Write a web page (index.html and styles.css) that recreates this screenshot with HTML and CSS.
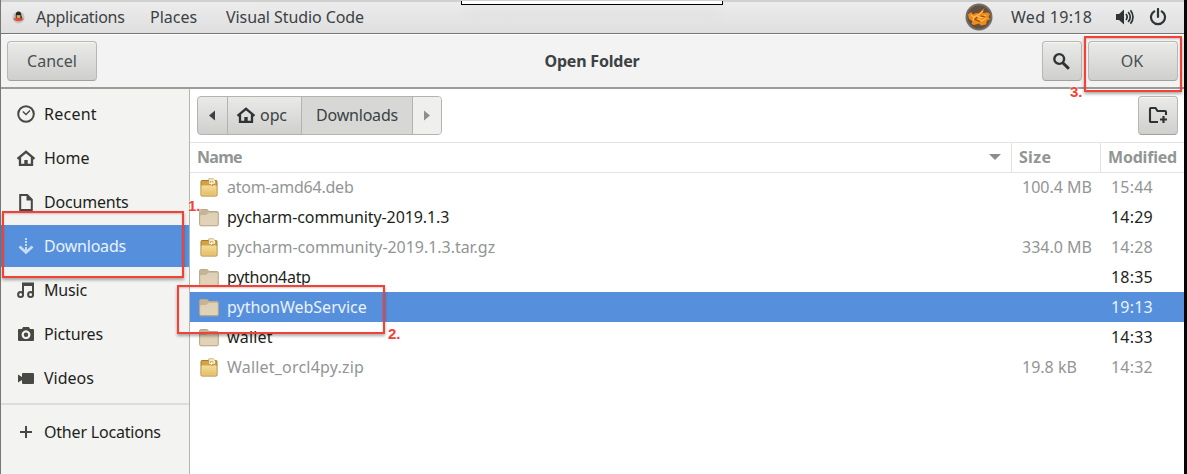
FILE: index.html
```html
<!DOCTYPE html>
<html lang="en">
<head>
<meta charset="utf-8">
<title>Open Folder</title>
<link rel="stylesheet" href="styles.css">
</head>
<body>
<svg class="defs" width="0" height="0">
  <defs>
    <linearGradient id="tan" x2="0" y2="1"><stop stop-color="#ddd0b7"/><stop offset="1" stop-color="#e3d3b8"/></linearGradient>
    <linearGradient id="gold" x2="0" y2="1"><stop stop-color="#f6dc96"/><stop offset="1" stop-color="#e3bd67"/></linearGradient>
    <symbol id="folder" viewBox="0 0 20 18"><path d="M.6 16V2.2Q.6 1 1.800 1h6q.8 0 1.200.8L10 3h8q1.300 0 1.300 1.300V16q0 1.300-1.300 1.300H2Q.6 17.300.6 16z" fill="#c6b594" stroke="#b9a889"/><path d="M1.200 15.800V7.500q0-1 1-1h5L9.500 4.300h8.300q.9 0 .9.900v10.600q0 .8-.8.8H2q-.8 0-.8-.8z" fill="url(#tan)"/></symbol>
    <symbol id="archive" viewBox="0 0 18 19"><path d="M1 3.500Q1 2.500 2 2.500h14q1 0 1 1V17q0 1-1 1H2q-1 0-1-1z" fill="#d3a243" stroke="#a87b2b"/><path d="M1.800 7.800h14.400v9.400H1.800z" fill="url(#gold)" stroke="#f3d998" stroke-width=".7"/><path d="M8.800.8h4.400l2.300 2.300v3h-3V8l-1.500-1.500H8.800z" fill="#fff8e5" stroke="#b98e42" stroke-width=".7"/><path d="M10.500 5V3.300h2.500v1.500" fill="none" stroke="#d0a552"/></symbol>
    <symbol id="house" viewBox="0 0 20 18"><path d="m1.500 9.800 8.500-7 8.500 7M4 8.300v7.600h12V8.300" fill="none" stroke="currentColor" stroke-width="2.300"/><path d="M8.300 16v-5h3.400v5" fill="currentColor"/></symbol>
  </defs>
</svg>
<div class="desktop">
  <header class="topbar">
    <svg class="distro" viewBox="0 0 14 14"><circle cx="7" cy="7.500" r="6.500" fill="#c3c5c4"/><path d="M4 5Q4 1 7 1t3 4l1 4H4z" fill="#22252a"/><path d="M5 5h4v3H5z" fill="#e6b044"/><path d="M1.500 8.500 7 8l5.500.5q-1 3-5.500 3t-5.500-3z" fill="#e54a3d"/></svg>
    <span class="t-app">Applications</span><span class="t-places">Places</span><span class="t-code">Visual Studio Code</span>
    <div class="tray">
      <svg class="orb" viewBox="0 0 28 28"><circle cx="14" cy="14" r="13.500" fill="#716e6a"/><circle cx="14" cy="14" r="11.500" fill="#66503d"/><path d="M3 11.500 6 9l2 2.500 3-1.500 3 .5L19.500 5l-2 5 5.500-.5 2 2-1.500 2 1.500 3-3 1-1 4-5 1-2-2-5 1.500-2.500-1 1-3L4 16z" fill="#f08a18"/><path d="m6 12 3 2 4-2 5-4m-6 5 4 2 5-3M9 14l-1 4m5-2 4 2 4-3" fill="none" stroke="#ffbe55" stroke-width="1.200"/><path d="m12 14-2 2.500 5 2m1-5.500 4 1" fill="none" stroke="#8d4c15" stroke-width="1.200"/></svg>
      <span class="clock">Wed 19:18</span>
      <svg class="volume" viewBox="0 0 19 16"><path d="M1 5h3l5-4.500v15L4 11H1z" fill="currentColor"/><path d="M11 5q2.300 3 0 6M13.200 3q4 5 0 10M15.500 1.200q5 6.800 0 13.600" fill="none" stroke="currentColor" stroke-width="1.700"/></svg>
      <svg class="power" viewBox="0 0 18 18"><path d="M5.200 3.300a7 7 0 1 0 7.600 0M9 1v8" fill="none" stroke="currentColor" stroke-width="2.200" stroke-linecap="round"/></svg>
    </div>
    <div class="overlay-edge"></div>
  </header>
  <div class="headerbar">
    <button class="btn cancel"><span>Cancel</span></button>
    <h1>Open Folder</h1>
    <button class="btn search"><svg viewBox="0 0 18 18"><circle cx="7.200" cy="7" r="4.900" fill="none" stroke="currentColor" stroke-width="2.400"/><path d="m11 11 5 4.800" stroke="currentColor" stroke-width="3" stroke-linecap="round"/></svg></button>
    <button class="btn ok"><span>OK</span></button>
  </div>
  <div class="content">
    <nav class="sidebar">
      <div class="place"><svg viewBox="0 0 20 20"><circle cx="10" cy="10" r="7.800" fill="none" stroke="currentColor" stroke-width="2"/><path d="m6.800 7.500 3.200 3 4-4" fill="none" stroke="currentColor" stroke-width="1.300"/></svg><span class="s-recent">Recent</span></div>
      <div class="place"><svg viewBox="0 -1 20 20"><use href="#house" width="20" height="18"/></svg><span>Home</span></div>
      <div class="place"><svg viewBox="0 0 20 20"><path d="M4.200 3h7l4.600 4.600V18H4.200z" fill="none" stroke="currentColor" stroke-width="2"/><path d="M10.500 2.500v6h6z" fill="currentColor"/></svg><span class="s-docs">Documents</span></div>
      <div class="place active"><svg viewBox="0 0 20 20"><path d="M10 2v2m0 1v2m0 1v2m0 1v5" stroke="currentColor" stroke-width="2"/><path d="m3.500 10.500 6.500 6 6.500-6" fill="none" stroke="currentColor" stroke-width="2.700"/></svg><span class="s-down">Downloads</span></div>
      <div class="place"><svg viewBox="0 0 20 20"><path d="M7 15V3.500h10V15M7 5h10" fill="none" stroke="currentColor" stroke-width="2"/><circle cx="4.600" cy="14.600" r="2.500" fill="none" stroke="currentColor" stroke-width="2"/><circle cx="14.600" cy="14.600" r="2.500" fill="none" stroke="currentColor" stroke-width="2"/></svg><span class="s-music">Music</span></div>
      <div class="place"><svg viewBox="0 0 20 20"><path fill="currentColor" fill-rule="evenodd" d="M3 5h3l1-2h6l1 2h3q1 0 1 1v10q0 1-1 1H3q-1 0-1-1V6q0-1 1-1zm7 1.300a4.400 4.400 0 1 0 .01 0z"/><circle cx="10" cy="10.700" r="2.200" fill="currentColor"/></svg><span class="s-pics">Pictures</span></div>
      <div class="place"><svg viewBox="0 0 20 20"><path d="M2 6.500 6 9V6q0-1 1-1h10q1 0 1 1v9q0 1-1 1H7q-1 0-1-1v-3l-4 2.500z" fill="currentColor"/></svg><span>Videos</span></div>
      <div class="separator"></div>
      <div class="place other"><svg viewBox="0 0 20 20"><path d="M4 10h12M10 4v12" stroke="currentColor" stroke-width="2"/></svg><span class="s-other">Other Locations</span></div>
    </nav>
    <main class="chooser">
      <div class="toolbar">
        <div class="pathbar">
          <div class="crumb back"><svg viewBox="0 0 6 10"><path d="M6 0v10L0 5z" fill="currentColor"/></svg></div>
          <div class="crumb home"><svg viewBox="0 0 20 18"><use href="#house"/></svg><span class="c-opc">opc</span></div>
          <div class="crumb current"><span>Downloads</span></div>
          <div class="crumb next"><svg viewBox="0 0 6 10"><path d="M0 0v10l6-5z" fill="currentColor"/></svg></div>
        </div>
        <button class="btn new-folder"><svg viewBox="0 0 20 18"><path d="M10 16H3q-1 0-1-1V3q0-1 1-1h4.500l2 3H17q1 0 1 1v3" fill="none" stroke="currentColor" stroke-width="2.100"/><path d="M12 13.500h7M15.500 10v7" stroke="currentColor" stroke-width="2.200"/></svg></button>
      </div>
      <div class="row columns"><div class="name"><span class="h-name">Name</span><i class="sort"></i></div><div class="size"><span class="h-size">Size</span></div><div class="time"><span>Modified</span></div></div>
      <div class="row file"><svg><use href="#archive"/></svg><div class="name"><span class="f1">atom-amd64.deb</span></div><div class="size"><span>100.4 MB</span></div><div class="time"><span>15:44</span></div></div>
      <div class="row"><svg><use href="#folder"/></svg><div class="name"><span class="f2">pycharm-community-2019.1.3</span></div><div class="size"></div><div class="time"><span>14:29</span></div></div>
      <div class="row file"><svg><use href="#archive"/></svg><div class="name"><span class="f3">pycharm-community-2019.1.3.tar.gz</span></div><div class="size"><span>334.0 MB</span></div><div class="time"><span>14:28</span></div></div>
      <div class="row"><svg><use href="#folder"/></svg><div class="name"><span class="f4">python4atp</span></div><div class="size"></div><div class="time"><span>18:35</span></div></div>
      <div class="row selected"><svg><use href="#folder"/></svg><div class="name"><span>pythonWebService</span></div><div class="size"></div><div class="time"><span>19:13</span></div></div>
      <div class="row"><svg><use href="#folder"/></svg><div class="name"><span class="f6">wallet</span></div><div class="size"></div><div class="time"><span>14:33</span></div></div>
      <div class="row file"><svg><use href="#archive"/></svg><div class="name"><span class="f7">Wallet_orcl4py.zip</span></div><div class="size"><span>19.8 kB</span></div><div class="time"><span>14:32</span></div></div>
    </main>
  </div>
  <div class="mark mark-1"></div><b class="step step-1">1.</b>
  <div class="mark mark-2"></div><b class="step step-2">2.</b>
  <div class="mark mark-3"></div><b class="step step-3">3.</b>
</div>
</body>
</html>
```

FILE: styles.css
```css
* { box-sizing: border-box; }
body { margin: 0; overflow: hidden; }
.defs { position: absolute; }
.desktop { position: relative; width: 1187px; height: 474px; display: flex; flex-direction: column; background: #f3f3f2; border-left: 1px solid #777; border-right: 3px solid #050505; font: 16px/22px "Noto Sans", "Open Sans", sans-serif; color: #1d1f20; }
span, h1 { white-space: nowrap; }
svg { display: block; flex: none; }
.topbar { position: relative; height: 34px; flex: none; display: flex; align-items: center; border-top: 2px solid #d0d0d0; border-bottom: 1px solid #777; background: linear-gradient(#ececec, #dfdfdf); color: #3b4144; padding: 0 17px 2px 11px; }
.distro { width: 13px; height: 14px; margin-right: 11px; }
.t-app { width: 114px; letter-spacing: -.28px; }
.t-places { width: 76px; }
.t-code { letter-spacing: -.08px; }
.tray { display: flex; align-items: center; margin-left: auto; color: #2e3436; }
.orb { width: 28px; height: 28px; margin-right: 18px; }
.clock { width: 104px; color: #3b4144; letter-spacing: .3px; }
.volume { width: 19px; height: 16px; margin-right: 15px; }
.power { width: 18px; height: 18px; }
.overlay-edge { position: absolute; left: 460px; top: -1px; width: 262px; height: 4px; background: #fff; border: 1px solid #000; border-top: 0; box-shadow: 0 8px 14px #0001; }
.headerbar { height: 55px; flex: none; display: flex; align-items: center; padding: 0 6px 1px 6px; background: #f3f3f3; border-top: 1px solid #fff; border-bottom: 2px solid #9b9b97; border-radius: 6px 6px 0 0; }
.headerbar h1 { flex: 1; margin: 0 0 0 45px; text-align: center; font: bold 16px/22px "Noto Sans", sans-serif; letter-spacing: -.2px; color: #3b4144; }
.btn { display: flex; align-items: center; justify-content: center; height: 40px; padding: 0 0 1px; border: 1px solid #b7b7b3; border-bottom-color: #a1a19d; border-radius: 4px; background: linear-gradient(#eaeae9, #cfcfcd); box-shadow: inset 0 1px #fff9; color: #2e3436; font: inherit; }
.btn span { color: #4a4f51; }
.headerbar .btn { padding-bottom: 0; }
.cancel { width: 90px; }
.search { width: 40px; margin-right: 6px; }
.search svg { width: 18px; height: 18px; margin-right: 2px; }
.ok { width: 90px; }
.ok span { margin-right: 2px; }
.content { flex: 1; display: flex; min-height: 0; }
.sidebar { width: 189px; flex: none; padding-top: 4px; border-right: 1px solid #b5b5b1; background: #f3f3f2; }
.place { height: 42px; margin-bottom: 2px; padding-left: 15px; display: flex; align-items: center; gap: 8px; }
.place svg { width: 20px; height: 20px; color: #484845; }
.s-recent { letter-spacing: .25px; }
.s-docs, .s-other { letter-spacing: -.2px; }
.s-down { letter-spacing: -.2px; }
.s-pics, .s-music { letter-spacing: -.15px; }
.place.active { background: #5690dd; color: #eaf2fc; }
.place.active svg { color: #c9dcf6; }
.separator { height: 2px; margin: 4px 0 6px; background: #deded9; }
.chooser { flex: 1; min-width: 0; background: #fff; }
.toolbar { height: 53px; padding: 7px 6px 0 7px; display: flex; justify-content: space-between; }
.pathbar { display: flex; height: 39px; border: 1px solid #b4b4ae; border-radius: 4px; background: linear-gradient(#eaeae9, #cfcfcd); color: #3b4144; overflow: hidden; }
.crumb { display: flex; align-items: center; justify-content: center; border-right: 1px solid #b4b4ae; padding-bottom: 1px; }
.crumb.back { width: 30px; padding-right: 2px; }
.back svg, .next svg { width: 6px; height: 11px; }
.crumb.home { width: 74px; gap: 4px; padding-right: 6px; }
.home svg { width: 20px; height: 18px; color: #2e3436; }
.c-opc { letter-spacing: -.1px; }
.crumb.current { width: 111px; background: #d7d7d5; letter-spacing: -.2px; }
.crumb.next { width: 28px; background: #efefee; border: 0; color: #8b8e8f; }
.new-folder { width: 40px; height: 39px; }
.new-folder svg { width: 20px; height: 18px; }
.row { display: flex; align-items: center; height: 30px; padding-left: 9px; }
.row svg { width: 20px; height: 19px; margin-right: 8px; }
.row .name { flex: 1; display: flex; align-items: center; }
.row .size { width: 90px; padding-left: 1px; }
.row .time { width: 73px; letter-spacing: .22px; }
.row.columns { height: 31px; border: solid #e4e4e3; border-width: 1px 0; padding: 0 0 2px 7px; font-weight: bold; color: #929595; align-items: stretch; margin-bottom: -1px; }
.columns .name { justify-content: space-between; padding-right: 10px; }
.columns .size, .columns .time { border-left: 1px solid #e4e4e3; display: flex; align-items: center; margin-bottom: -2px; padding-bottom: 2px; }
.columns .size { width: 89px; padding-left: 7px; }
.columns .time { width: 84px; padding-left: 7px; letter-spacing: -.2px; }
.h-name { letter-spacing: -.7px; }
.h-size { letter-spacing: .3px; }
.f1 { letter-spacing: -.22px; }
.f2 { letter-spacing: -.09px; }
.f3 { letter-spacing: -.04px; }
.f4 { letter-spacing: -.3px; }
.f6, .f7 { letter-spacing: .2px; }
.sort { border: 6px solid transparent; border-top-color: #8b8e8f; border-bottom: 0; }
.file { color: #929595; }
.selected { background: #5690dd; color: #eaf2fc; }
.mark { position: absolute; border: 2px solid #f34235; box-shadow: 0 2px 3px #0005, inset 0 1px 2px #0003; }
.mark-1 { left: 1px; top: 211px; width: 182px; height: 67px; }
.mark-2 { left: 176px; top: 285px; width: 208px; height: 49px; }
.mark-3 { left: 1083px; top: 36px; width: 98px; height: 56px; }
.step { position: absolute; color: #f34235; font: bold 15px/16px "Liberation Sans", Arial, sans-serif; text-shadow: 0 0 2px #fff, 0 0 2px #fff; }
.step-1 { left: 187px; top: 198px; }
.step-2 { left: 387px; top: 326px; }
.step-3 { left: 1069px; top: 84px; }
```
